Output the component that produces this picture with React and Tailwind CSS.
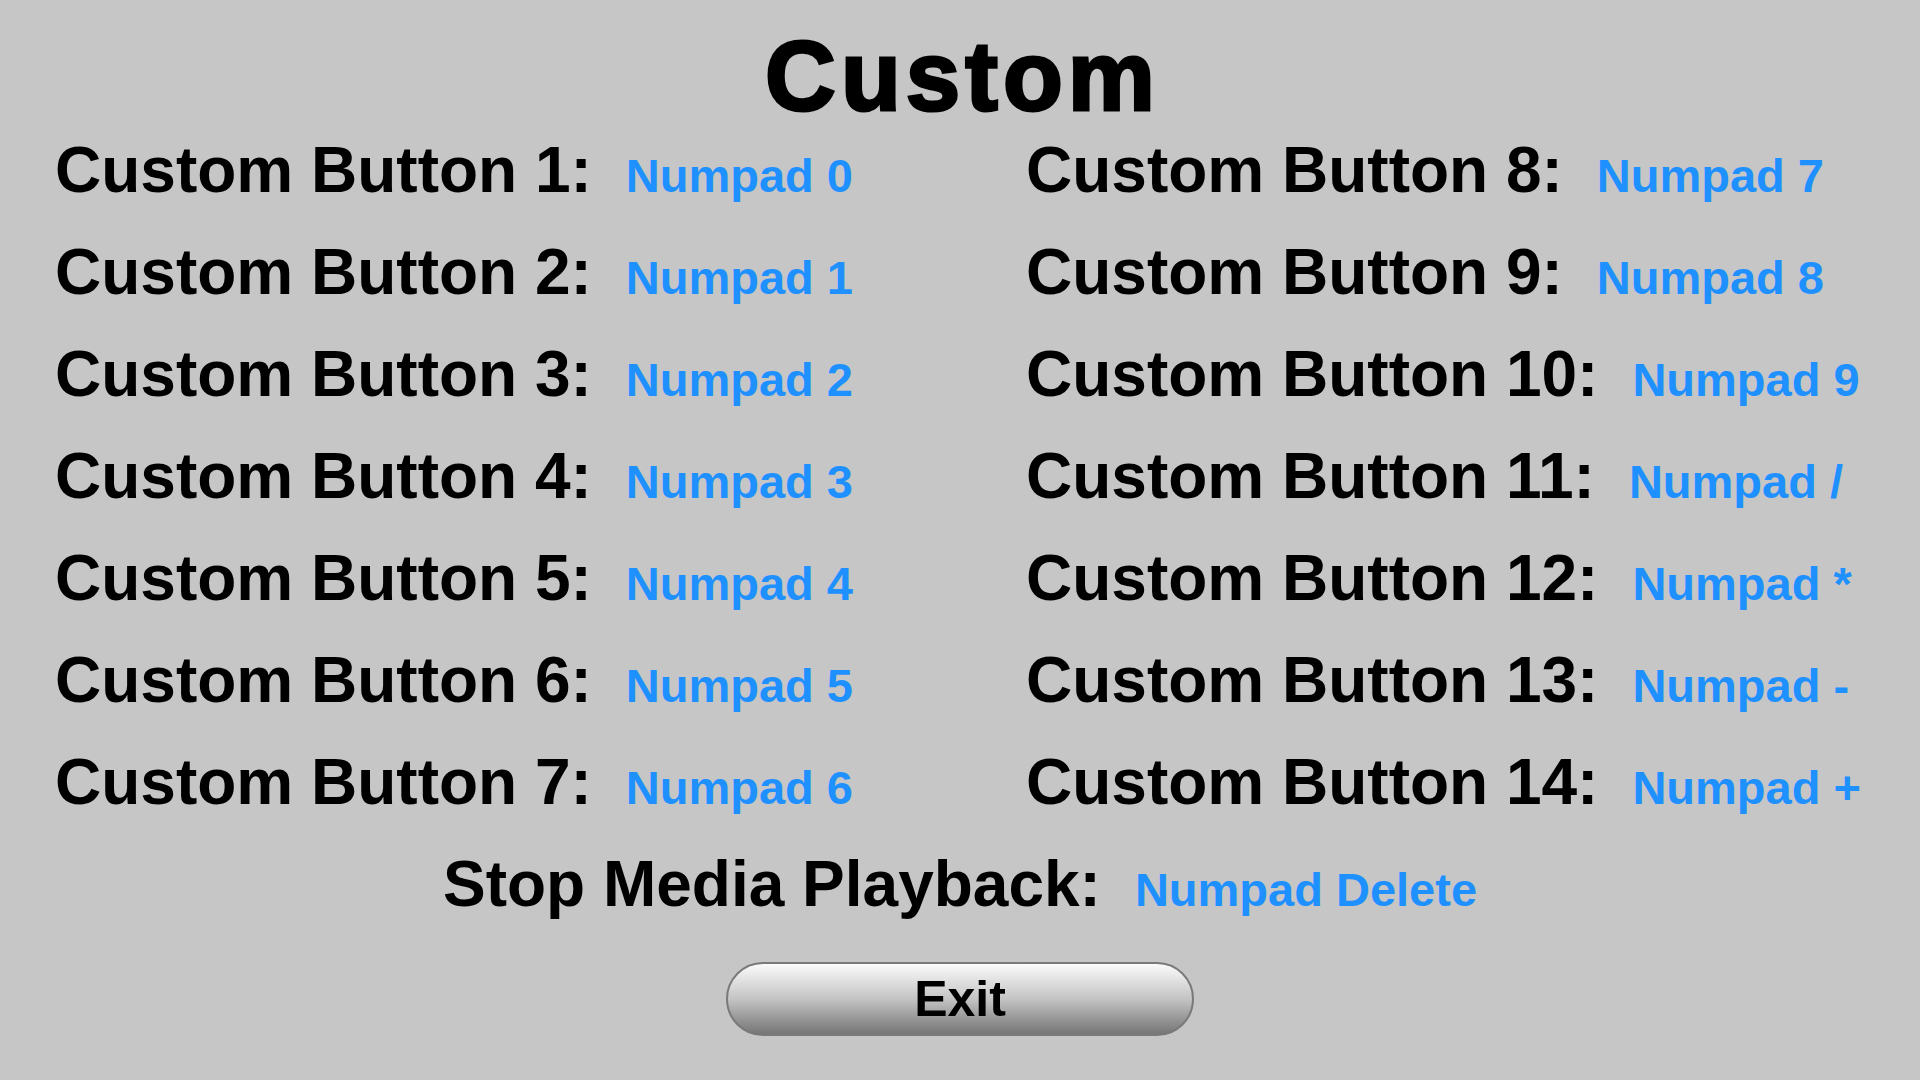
const left = [
  ["Custom Button 1:", "Numpad 0"],
  ["Custom Button 2:", "Numpad 1"],
  ["Custom Button 3:", "Numpad 2"],
  ["Custom Button 4:", "Numpad 3"],
  ["Custom Button 5:", "Numpad 4"],
  ["Custom Button 6:", "Numpad 5"],
  ["Custom Button 7:", "Numpad 6"],
];

const right = [
  ["Custom Button 8:", "Numpad 7"],
  ["Custom Button 9:", "Numpad 8"],
  ["Custom Button 10:", "Numpad 9"],
  ["Custom Button 11:", "Numpad /"],
  ["Custom Button 12:", "Numpad *"],
  ["Custom Button 13:", "Numpad -"],
  ["Custom Button 14:", "Numpad +"],
];

const Binding = ({ label, value }) => (
  <div className="flex h-[102px] items-baseline whitespace-nowrap leading-[102px]">
    <span className="text-[64px] font-bold text-black">{label}</span>
    <span className="ml-[34px] text-[47px] font-bold text-[#1e90ff]">{value}</span>
  </div>
);

export default function App() {
  return (
    <div className="h-[1080px] w-[1920px] overflow-hidden bg-[#c6c6c6] font-['Liberation_Sans',Arial,sans-serif]">
      <div className="h-[119px] pt-[27px] text-center">
        <h1 className="pl-[5px] text-[98px] font-bold leading-none tracking-[5px] text-black [-webkit-text-stroke:3px_black]">
          Custom
        </h1>
      </div>

      <div className="flex pl-[55px]">
        <div className="w-[971px]">
          {left.map(([label, value]) => (
            <Binding key={label} label={label} value={value} />
          ))}
        </div>
        <div>
          {right.map(([label, value]) => (
            <Binding key={label} label={label} value={value} />
          ))}
        </div>
      </div>

      <div className="flex justify-center">
        <Binding label="Stop Media Playback:" value="Numpad Delete" />
      </div>

      <div className="mt-[27px] flex justify-center">
        <button className="h-[74px] w-[468px] rounded-full border-2 border-[#7a7a7a] bg-gradient-to-b from-[#fbfbfb] via-[#c4c4c4] to-[#767676] text-[50px] font-bold leading-none text-black">
          Exit
        </button>
      </div>
    </div>
  );
}
